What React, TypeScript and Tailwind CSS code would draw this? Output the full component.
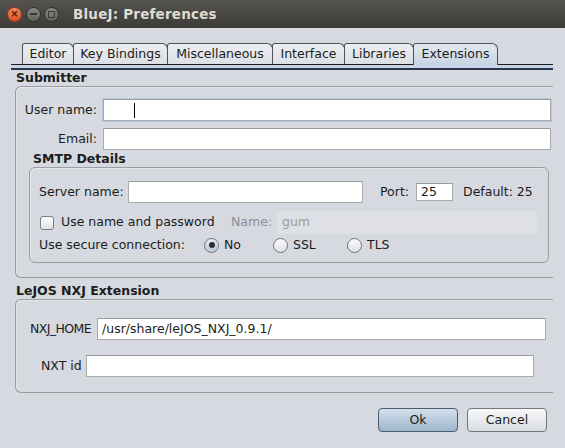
import React from "react";

const tabs = [
  { name: "Editor", w: "w-[52px]" },
  { name: "Key Bindings", w: "w-[95px]" },
  { name: "Miscellaneous", w: "w-[106px]" },
  { name: "Interface", w: "w-[73px]" },
  { name: "Libraries", w: "w-[70px]" },
  { name: "Extensions", w: "w-[85px]", active: true },
];

function TextField({ className = "", children }: { className?: string; children?: React.ReactNode }) {
  return (
    <div className={`flex items-center bg-white border border-[#a7a9ad] border-t-[#9a9ca0] ${className}`}>
      {children}
    </div>
  );
}

function Radio({ checked = false }: { checked?: boolean }) {
  return (
    <div
      className={`flex h-[15px] w-[15px] shrink-0 items-center justify-center rounded-full border border-[#6f7378] ${
        checked ? "bg-gradient-to-b from-[#e4ebf3] to-[#b9c9da]" : "bg-gradient-to-b from-[#fbfbfc] to-[#dfe2e6]"
      }`}
    >
      {checked && <div className="h-[6px] w-[6px] rounded-full bg-[#2a2e35]" />}
    </div>
  );
}

export default function App() {
  return (
    <div
      className="flex h-[448px] w-[565px] flex-col overflow-hidden bg-[#d6d9df] text-[12.5px] text-[#1c1c1c]"
      style={{ fontFamily: '"DejaVu Sans", sans-serif' }}
    >
      {/* window title bar */}
      <div className="flex h-[28px] shrink-0 items-center bg-gradient-to-b from-[#55534e] to-[#3c3b37] pl-[7px]">
        <div className="flex h-[15px] w-[15px] items-center justify-center rounded-full border border-[#9b3c16] bg-gradient-to-b from-[#f58a5a] to-[#df4f1c] text-[10px] font-bold leading-none text-[#4a1a08]">
          ×
        </div>
        <div className="ml-[4px] flex h-[15px] w-[15px] items-center justify-center rounded-full border border-[#2f2e2b] bg-gradient-to-b from-[#8a8782] to-[#64625d]">
          <div className="h-[2px] w-[7px] bg-[#3a3935]" />
        </div>
        <div className="ml-[3px] flex h-[15px] w-[15px] items-center justify-center rounded-full border border-[#2f2e2b] bg-gradient-to-b from-[#8a8782] to-[#64625d]">
          <div className="h-[7px] w-[7px] border border-[#3a3935]" />
        </div>
        <div className="ml-[14px] text-[13.5px] font-bold tracking-[0.2px] text-[#dfdbd2]">BlueJ: Preferences</div>
      </div>

      <div className="flex flex-col pl-[11px]">
        {/* tab strip */}
        <div className="mt-[15px] flex pl-[11px]">
          {tabs.map((t, i) => (
            <div
              key={t.name}
              className={`${t.w} ${i > 0 ? "-ml-px" : ""} relative flex h-[21px] items-center justify-center rounded-tl-[3px] rounded-tr-[6px] border-x border-t border-[#4f5156] ${
                t.active
                  ? "z-10 -mb-px h-[22px] bg-gradient-to-b from-[#e2e9f1] to-[#c6d4e3]"
                  : "bg-gradient-to-b from-[#eceef1] to-[#dcdfe4]"
              }`}
            >
              {t.name}
            </div>
          ))}
        </div>
        <div className="h-[6px] w-[542px] border-t border-b-2 border-t-[#1b1e24] border-b-[#27344a] bg-[#c6d4e3]" />

        {/* Submitter */}
        <div className="ml-[5px] h-[16px] font-bold leading-[16px]">Submitter</div>
        <div className="ml-[4px] flex h-[192px] w-[538px] flex-col rounded-l-[6px] border-y border-l border-[#9a9da2] shadow-[inset_1px_1px_0_#e4e6ea]">
          <div className="mt-[12px] flex items-center">
            <div className="w-[81px] text-right">User name:</div>
            <TextField className="ml-[6px] h-[22px] w-[448px] border-[#7ea3cf] shadow-[0_0_0_1px_#b4c9e2]">
              <div className="ml-[30px] h-[15px] w-px bg-black" />
            </TextField>
          </div>
          <div className="mt-[7px] flex items-center">
            <div className="w-[81px] text-right">Email:</div>
            <TextField className="ml-[6px] h-[22px] w-[448px]" />
          </div>

          <div className="ml-[17px] mt-[1px] h-[16px] font-bold leading-[16px]">SMTP Details</div>
          <div className="ml-[13px] flex h-[96px] w-[520px] flex-col rounded-[6px] border border-[#9a9da2] shadow-[inset_1px_1px_0_#e4e6ea]">
            <div className="mt-[13px] flex items-center pl-[9px]">
              <div className="w-[89px]">Server name:</div>
              <TextField className="h-[22px] w-[235px]" />
              <div className="ml-[17px] w-[36px]">Port:</div>
              <TextField className="h-[18px] w-[37px] items-start pl-[4px]">
                <span className="leading-[15px]">25</span>
              </TextField>
              <div className="ml-[10px]">Default: 25</div>
            </div>
            <div className="mt-[8px] flex h-[23px] items-center pl-[10px]">
              <div className="h-[14px] w-[14px] shrink-0 rounded-[3px] border border-[#7b7f84] bg-gradient-to-b from-[#fbfbfc] to-[#e0e3e7]" />
              <div className="ml-[7px] w-[170px]">Use name and password</div>
              <div className="w-[46px] text-[#8c8f94]">Name:</div>
              <div className="flex h-[23px] w-[260px] items-center bg-[#dee0e5] pl-[5px] text-[#999ca0]">gum</div>
            </div>
            <div className="mt-[3px] flex h-[16px] items-center pl-[9px]">
              <div className="w-[165px]">Use secure connection:</div>
              <Radio checked />
              <div className="ml-[5px] w-[49px]">No</div>
              <Radio />
              <div className="ml-[5px] w-[54px]">SSL</div>
              <Radio />
              <div className="ml-[5px]">TLS</div>
            </div>
          </div>
        </div>

        {/* LeJOS NXJ Extension */}
        <div className="ml-[5px] mt-[5px] h-[16px] font-bold leading-[16px]">LeJOS NXJ Extension</div>
        <div className="ml-[4px] flex h-[94px] w-[538px] flex-col rounded-l-[6px] border-y border-l border-[#9a9da2] shadow-[inset_1px_1px_0_#e4e6ea]">
          <div className="mt-[18px] flex items-center pl-[14px]">
            <div className="w-[67px] tracking-[-0.6px]">NXJ_HOME</div>
            <TextField className="h-[22px] w-[449px] pl-[4px]">/usr/share/leJOS_NXJ_0.9.1/</TextField>
          </div>
          <div className="mt-[15px] flex items-center pl-[25px]">
            <div className="w-[45px]">NXT id</div>
            <TextField className="h-[22px] w-[448px]" />
          </div>
        </div>

        {/* dialog buttons */}
        <div className="mt-[15px] flex w-[536px] justify-end gap-[9px]">
          <button className="h-[24px] w-[80px] rounded-[4px] border border-[#4e5b6d] bg-gradient-to-b from-[#d3dfeb] to-[#9fb6cd]">
            Ok
          </button>
          <button className="h-[24px] w-[80px] rounded-[4px] border border-[#74787d] bg-gradient-to-b from-[#f7f8f9] to-[#d9dce1]">
            Cancel
          </button>
        </div>
      </div>
    </div>
  );
}
